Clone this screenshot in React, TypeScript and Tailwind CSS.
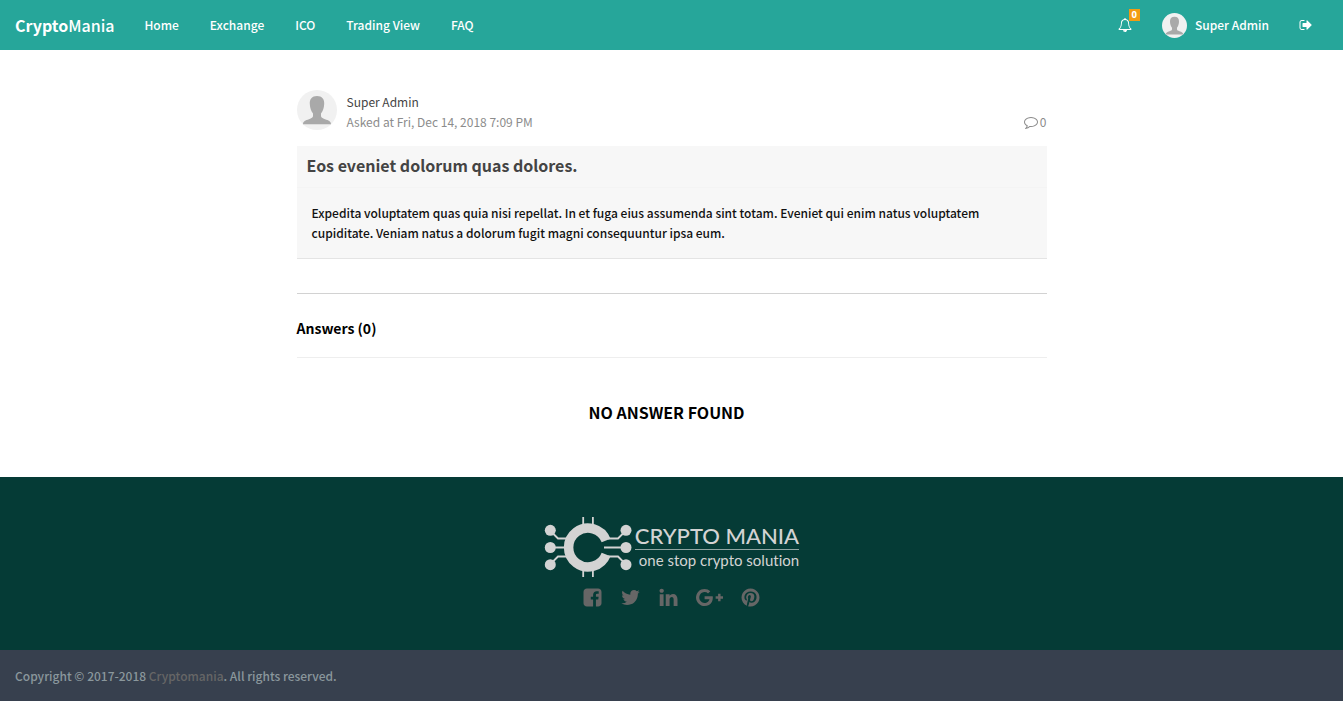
import React from "react";

type IconProps = { d: string; className: string; width?: number };

function Icon({ d, className, width = 1792 }: IconProps) {
  return (
    <svg aria-hidden="true" viewBox={`0 0 ${width} 1792`} className={className} fill="currentColor">
      <path d={d} />
    </svg>
  );
}

const BELL =
  "M912 1696q0-16-16-16-59 0-101.5-42.5t-42.5-101.5q0-16-16-16t-16 16q0 73 51.5 124.5t124.5 51.5q16 0 16-16zm-666-288h1300q-266-300-266-832 0-51-24-105t-69-103-121.5-80.5-169.5-31.5-169.5 31.5-121.5 80.5-69 103-24 105q0 532-266 832zm1482 0q0 52-38 90t-90 38h-448q0 106-75 181t-181 75-181-75-75-181h-448q-52 0-90-38t-38-90q50-42 91-88t85-119.5 74.5-158.5 50-206 19.5-260q0-152 117-282.5t307-158.5q-8-19-8-39 0-40 28-68t68-28 68 28 28 68q0 20-8 39 190 28 307 158.5t117 282.5q0 139 19.5 260t50 206 74.5 158.5 85 119.5 91 88z";
const SIGN_OUT =
  "M704 1440q0 4 1 20t.5 26.5-3 23.5-10 19.5-20.5 6.5h-320q-119 0-203.5-84.5t-84.5-203.5v-704q0-119 84.5-203.5t203.5-84.5h320q13 0 22.5 9.5t9.5 22.5q0 4 1 20t.5 26.5-3 23.5-10 19.5-20.5 6.5h-320q-66 0-113 47t-47 113v704q0 66 47 113t113 47h312l11.5 1 11.5 3 8 5.5 7 9 2 13.5zm928-544q0 26-19 45l-544 544q-19 19-45 19t-45-19-19-45v-288h-448q-26 0-45-19t-19-45v-384q0-26 19-45t45-19h448v-288q0-26 19-45t45-19 45 19l544 544q19 19 19 45z";
const COMMENT =
  "M896 384q-204 0-381.5 69.5t-282 187.5-104.5 255q0 112 71.5 213.5t201.5 175.5l87 50-27 96q-24 91-70 172 152-63 275-171l43-38 57 6q69 8 130 8 204 0 381.5-69.5t282-187.5 104.5-255-104.5-255-282-187.5-381.5-69.5zm896 512q0 174-120 321.5t-326 233-450 85.5q-70 0-145-8-198 175-460 242-49 14-114 22h-5q-15 0-27-10.5t-16-27.5v-1q-3-4-.5-12t2-10 4.5-9.5l6-9 7-8.5 8-9q7-8 31-34.5t34.5-38 31-39.5 32.5-51 27-59 26-76q-157-89-247.5-220t-90.5-281q0-174 120-321.5t326-233 450-85.5 450 85.5 326 233 120 321.5z";
const FACEBOOK =
  "M1376 128q119 0 203.5 84.5t84.5 203.5v960q0 119-84.5 203.5t-203.5 84.5h-188v-595h199l30-232h-229v-148q0-56 23.5-84t91.5-28l122-1v-207q-63-9-178-9-136 0-217.5 80t-81.5 226v171h-200v232h200v595h-532q-119 0-203.5-84.5t-84.5-203.5v-960q0-119 84.5-203.5t203.5-84.5h960z";
const TWITTER =
  "M1684 408q-67 98-162 167 1 14 1 42 0 130-38 259.5t-115.5 248.5-184.5 210.5-258 146-323 54.5q-271 0-496-145 35 4 78 4 225 0 401-138-105-2-188-64.5t-114-159.5q33 5 61 5 43 0 85-11-112-23-185.5-111.5t-73.5-205.5v-4q68 38 146 41-66-44-105-115t-39-154q0-88 44-163 121 149 294.5 238.5t371.5 99.5q-8-38-8-74 0-134 94.5-228.5t228.5-94.5q140 0 236 102 109-21 205-78-37 115-142 178 93-10 186-50z";
const LINKEDIN =
  "M477 625v991h-330v-991h330zm21-306q1 73-50.5 122t-135.5 49h-2q-82 0-132-49t-50-122q0-74 51.5-122.5t134.5-48.5 133 48.5 51 122.5zm1166 729v568h-329v-530q0-105-40.5-164.5t-126.5-59.5q-63 0-105.5 34.5t-63.5 85.5q-11 30-11 81v553h-329q2-399 2-647t-1-296l-1-48h329v144h-2q20-32 41-56t56.5-52 87-43.5 114.5-15.5q171 0 275 113.5t104 332.5z";
const GOOGLE_PLUS =
  "M1437 913q0 208-87 370.5t-248 254-369 91.5q-149 0-285-58t-234-156-156-234-58-285 58-285 156-234 234-156 285-58q286 0 491 192l-199 191q-117-113-292-113-123 0-227.5 62t-165.5 168.5-61 232.5 61 232.5 165.5 168.5 227.5 62q83 0 152.5-23t114.5-57.5 78.5-78.5 49-83 21.5-74h-416v-252h692q12 63 12 122zm867-122v210h-209v209h-210v-209h-209v-210h209v-209h210v209h209z";
const PINTEREST =
  "M1664 896q0 209-103 385.5t-279.5 279.5-385.5 103q-111 0-218-32 59-93 78-164 9-34 54-211 20 39 73 67.5t114 28.5q121 0 216-68.5t147-188.5 52-270q0-114-59.5-214t-172.5-163-255-63q-105 0-196 29t-154.5 77-109 110.5-67 129.5-21.5 134q0 104 40 183t117 111q30 12 38-20 2-7 8-31t8-30q6-23-11-43-51-61-51-151 0-151 104.5-259.5t273.5-108.5q151 0 235.5 82t84.5 213q0 170-68.5 289t-175.5 119q-61 0-98-43.5t-23-104.5q8-35 26.5-93.5t30-103 11.5-75.5q0-50-27-83t-77-33q-62 0-105 57t-43 142q0 73 25 122l-99 418q-17 70-13 177-206-91-333-281t-127-423q0-209 103-385.5t279.5-279.5 385.5-103 385.5 103 279.5 279.5 103 385.5z";

const NAV = ["Home", "Exchange", "ICO", "Trading View", "FAQ"];

const SOCIAL = [
  { name: "Facebook", d: FACEBOOK, width: 1792 },
  { name: "Twitter", d: TWITTER, width: 1792 },
  { name: "LinkedIn", d: LINKEDIN, width: 1792 },
  { name: "Google Plus", d: GOOGLE_PLUS, width: 2304 },
  { name: "Pinterest", d: PINTEREST, width: 1792 },
];

function Avatar({ className }: { className: string }) {
  return (
    <svg aria-hidden="true" viewBox="0 0 40 40" className={className}>
      <circle cx="20" cy="20" r="20" fill="#f1f1f1" />
      <path
        fill="#a9a9a9"
        d="M20 6c5 0 7.500 3 7.200 8-.2 4-1.200 7-3.200 9.500v2.500c0 1.500 1.500 2.300 4 3.200 3.500 1.200 6 2 6 5H6c0-3 2.500-3.800 6-5 2.500-.9 4-1.700 4-3.200v-2.500c-2-2.500-3-5.500-3.200-9.500C12.500 9 15 6 20 6z"
      />
    </svg>
  );
}

function LogoMark() {
  return (
    <svg aria-hidden="true" viewBox="0 0 88 62" className="h-[62px] w-[88px] text-[#d3d3d3]">
      <g fill="none" stroke="currentColor" strokeWidth="1.8">
        <path d="M39.200 1v10M48.900 1v10M39.200 51v10M48.900 51v10" />
        <path d="M6 14.500l8 8h9M6 31.500h18M6 48.500l8-8h9" />
        <path d="M82 14.500l-8 8h-10M82 31.500H60M82 48.500l-8-8h-10" />
        <path d="M62.100 24.500A19.400 19.400 0 1 0 62.100 38.500" strokeWidth="9.500" />
      </g>
      <g fill="currentColor">
        <circle cx="6.300" cy="14.300" r="5.500" />
        <circle cx="6.300" cy="31.500" r="5.500" />
        <circle cx="6.300" cy="48.700" r="5.500" />
        <circle cx="82" cy="14.300" r="5.500" />
        <circle cx="82" cy="31.500" r="5.500" />
        <circle cx="82" cy="48.700" r="5.500" />
      </g>
    </svg>
  );
}

function Header() {
  return (
    <header className="flex h-[50px] items-center justify-between bg-[#26a69a] px-[15px] text-white">
      <div className="flex items-center">
        <a href="#" className="text-base">
          <b className="font-bold">Crypto</b>Mania
        </a>
        <nav aria-label="Main" className="ml-[15px] flex gap-px">
          {NAV.map((label) => (
            <a key={label} href="#" className="px-[15px]">
              {label}
            </a>
          ))}
        </nav>
      </div>
      <div className="flex items-center">
        <a href="#" aria-label="Notifications" className="relative px-[15px]">
          <Icon d={BELL} className="size-[14px]" />
          <span className="absolute -top-[9px] right-[7px] bg-[#f39c12] px-[3px] text-[9px] leading-3 font-black">
            0
          </span>
        </a>
        <a href="#" className="flex items-center gap-2 px-[15px]">
          <Avatar className="size-[25px]" />
          Super Admin
        </a>
        <a href="#" aria-label="Sign out" className="px-[15px]">
          <Icon d={SIGN_OUT} className="size-[14px]" />
        </a>
      </div>
    </header>
  );
}

function Question() {
  return (
    <article>
      <div className="flex items-end gap-[10px] text-[12px] font-normal text-[#8c8c8c]">
        <Avatar className="size-10" />
        <div className="-mb-[2px] grow">
          <p className="text-[#444]">Super Admin</p>
          <p>Asked at Fri, Dec 14, 2018 7:09 PM</p>
        </div>
        <span className="-mb-[2px] flex items-center gap-[2px]">
          <Icon d={COMMENT} className="size-[14px]" />0
        </span>
      </div>
      <div className="mt-4 border-b border-[#e4e4e4] bg-[#f7f7f7]">
        <h1 className="border-b border-[#f4f4f4] px-[10px] pt-[9px] pb-3 text-base leading-5 font-bold text-[#444]">
          Eos eveniet dolorum quas dolores.
        </h1>
        <p className="p-[15px] text-[#111]">
          Expedita voluptatem quas quia nisi repellat. In et fuga eius assumenda sint totam. Eveniet qui enim
          natus voluptatem cupiditate. Veniam natus a dolorum fugit magni consequuntur ipsa eum.
        </p>
      </div>
    </article>
  );
}

function Answers() {
  return (
    <section className="mt-[34px] border-t border-[#d2d2d2]">
      <h2 className="border-b border-[#eee] pt-6 pb-[19px] text-[14px] leading-5 font-bold">Answers (0)</h2>
      <p className="pt-11 pr-[10px] pb-[55px] text-center text-base leading-5 font-bold">NO ANSWER FOUND</p>
    </section>
  );
}

function Footer() {
  return (
    <footer>
      <div className="flex flex-col items-center bg-[#053b36] pt-[39px] pb-[42px]">
        <a href="#" className="flex items-center gap-[3px] font-['Lato',sans-serif] text-[#d3d3d3]">
          <LogoMark />
          <span className="flex flex-col text-right [font-variant-ligatures:none]">
            <span className="border-b border-[#8fa5a2] pb-[1px] text-[22px] leading-6 font-medium">CRYPTO MANIA</span>
            <span className="text-[15px] leading-5 font-normal">one stop crypto solution</span>
          </span>
        </a>
        <div className="mt-[9px] flex gap-[17px] text-[#666]">
          {SOCIAL.map(({ name, d, width }) => (
            <a key={name} href="#" aria-label={name}>
              <Icon d={d} width={width} className="h-[21px]" />
            </a>
          ))}
        </div>
      </div>
      <div className="bg-[#37404e] px-[15px] pt-4 pb-[15px] text-[#8a979c]">
        Copyright © 2017-2018{" "}
        <a href="#" className="text-[#666]">
          Cryptomania
        </a>
        . All rights reserved.
      </div>
    </footer>
  );
}

export default function App() {
  return (
    <div className="bg-white font-['Noto_Sans_CJK_SC',sans-serif] text-[12px] leading-5 font-medium text-black">
      <Header />
      <main className="mx-auto max-w-[750px] pt-10">
        <Question />
        <Answers />
      </main>
      <Footer />
    </div>
  );
}
